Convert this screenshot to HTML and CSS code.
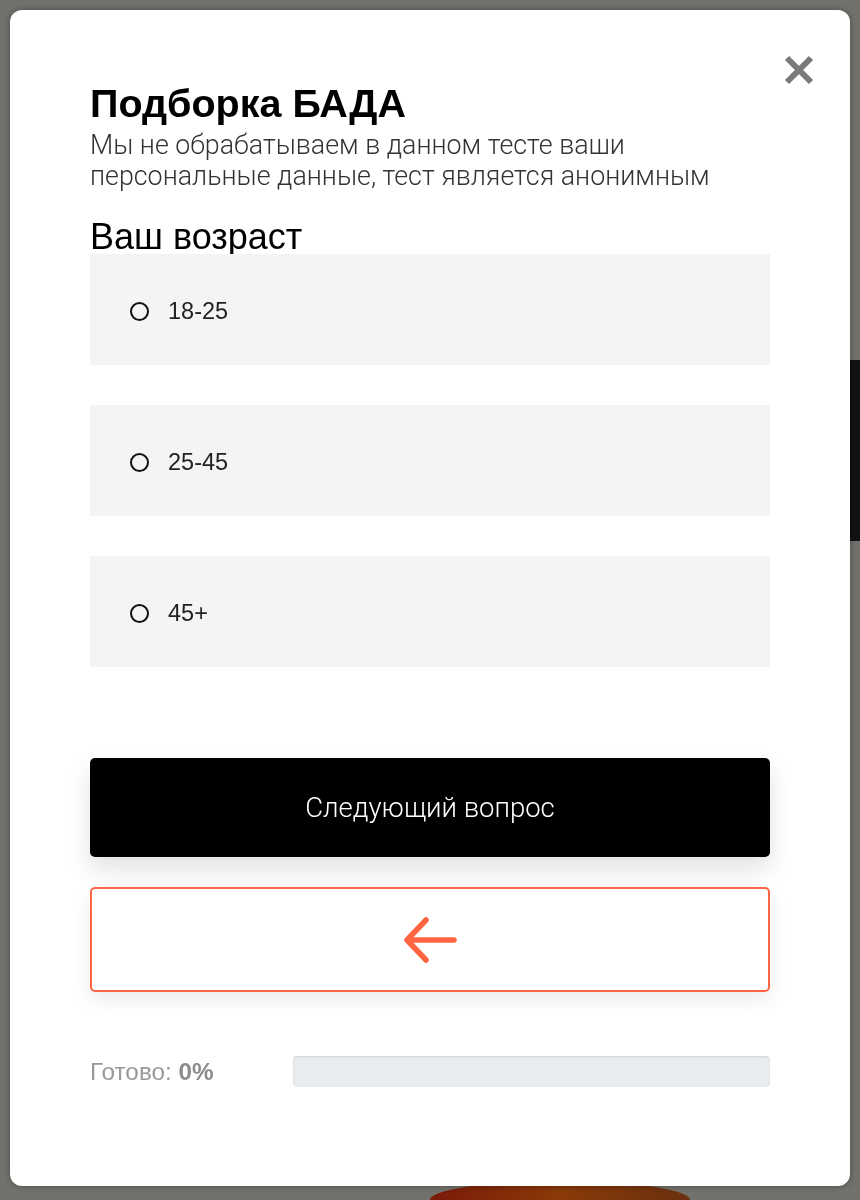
FILE: index.html
```html
<!DOCTYPE html>
<html lang="ru">
<head>
    <meta charset="UTF-8">
    <meta name="viewport" content="width=device-width, initial-scale=1.0">
    <title>Подборка БАДА</title>
    <link rel="stylesheet" href="styles.css">
</head>
<body>
    <!-- Page behind the popup (dimmed) -->
    <div class="page">
        <div class="page-bar"></div>
        <div class="page-product"></div>
    </div>

    <!-- Quiz popup -->
    <div class="overlay">
        <div class="quiz">
            <button class="quiz-close" aria-label="Закрыть">
                <svg width="30" height="30" viewBox="0 0 30 30">
                    <path d="M3 3 L27 27 M27 3 L3 27" stroke="#7a7a7a" stroke-width="6" fill="none"/>
                </svg>
            </button>

            <h1 class="quiz-title">Подборка БАДА</h1>
            <p class="quiz-subtitle">Мы не обрабатываем в данном тесте ваши персональные данные, тест является анонимным</p>

            <h2 class="quiz-question">Ваш возраст</h2>
            <div class="quiz-options">
                <label class="quiz-option"><span class="radio"></span>18-25</label>
                <label class="quiz-option"><span class="radio"></span>25-45</label>
                <label class="quiz-option"><span class="radio"></span>45+</label>
            </div>

            <button class="btn-next">Следующий вопрос</button>
            <button class="btn-back" aria-label="Назад">
                <svg width="56" height="46" viewBox="0 0 56 46">
                    <path d="M52 23 H5 M24 3 L5 23 L24 43" stroke="#ff6543" stroke-width="5.5" stroke-linecap="round" stroke-linejoin="round" fill="none"/>
                </svg>
            </button>

            <div class="quiz-progress">
                <span class="progress-label">Готово: <b>0%</b></span>
                <div class="progress-bar"></div>
            </div>
        </div>
    </div>
</body>
</html>
```
FILE: styles.css
```css
/* Page */
body {
    margin: 0;
    height: 1200px;
    overflow: hidden;
    background: #72716c;
    font-family: "Liberation Sans", Arial, sans-serif;
}

/* Dimmed content behind the popup */
.page {
    display: flex;
    flex-direction: column;
    padding-top: 360px;
}

.page-bar {
    margin-left: 850px;
    width: 10px;
    height: 181px;
    background: #121212;
}

.page-product {
    margin-top: 640px;
    margin-left: 430px;
    width: 260px;
    height: 19px;
    border-radius: 50% 50% 0 0 / 100% 100% 0 0;
    background: linear-gradient(90deg, #7a1a0a, #8a3a08 50%, #6a3010);
}

/* Popup */
.overlay {
    position: fixed;
    inset: 0;
    padding: 10px;
}

.quiz {
    position: relative;
    box-sizing: border-box;
    height: 1176px;
    padding: 71px 80px 0;
    background: #fff;
    border-radius: 12px;
    box-shadow: 0 0 6px rgba(0, 0, 0, 0.35);
    display: flex;
    flex-direction: column;
}

.quiz-close {
    position: absolute;
    top: 45px;
    right: 36px;
    padding: 0;
    border: none;
    background: none;
    cursor: pointer;
    line-height: 0;
}

.quiz-title {
    margin: 0;
    font-size: 39.5px;
    line-height: 44px;
    font-weight: bold;
    color: #000;
}

.quiz-subtitle {
    margin: 5px 0 0;
    font-family: Roboto, "Liberation Sans", sans-serif;
    font-weight: 300;
    font-size: 26.8px;
    line-height: 31px;
    color: #333;
}

.quiz-question {
    margin: 28px 0 0;
    font-size: 36px;
    line-height: 34px;
    font-weight: normal;
    color: #000;
}

/* Answer options */
.quiz-options {
    position: relative;
    display: flex;
    flex-direction: column;
    gap: 40px;
}

.quiz-option {
    box-sizing: border-box;
    height: 111px;
    padding: 3px 0 0 40px;
    display: flex;
    align-items: center;
    gap: 19px;
    background: #f4f4f4;
    font-size: 23.5px;
    color: #222;
    cursor: pointer;
}

.radio {
    box-sizing: border-box;
    width: 19px;
    height: 19px;
    margin-top: 1px;
    border: 2px solid #111;
    border-radius: 50%;
}

/* Buttons */
.btn-next {
    margin-top: 91px;
    height: 99px;
    border: none;
    border-radius: 5px;
    background: #000;
    color: #fff;
    font-family: Roboto, "Liberation Sans", sans-serif;
    font-weight: 300;
    font-size: 27.5px;
    box-shadow: 0 12px 24px rgba(0, 0, 0, 0.12);
    cursor: pointer;
}

.btn-back {
    margin-top: 30px;
    height: 105px;
    border: 2px solid #ff6543;
    border-radius: 5px;
    background: #fff;
    box-shadow: 0 8px 20px rgba(0, 0, 0, 0.08);
    display: flex;
    align-items: center;
    justify-content: center;
    cursor: pointer;
}

/* Progress */
.quiz-progress {
    margin-top: 64px;
    display: flex;
    align-items: center;
    gap: 78px;
}

.progress-label {
    width: 125px;
    white-space: nowrap;
    font-size: 24.3px;
    color: #999;
}

.progress-label b {
    color: #8c8c8c;
}

.progress-bar {
    flex: 1;
    height: 31px;
    border-radius: 4px;
    background: #e9ecef;
    box-shadow: inset 0 1px 2px rgba(0, 0, 0, 0.1);
}
```
